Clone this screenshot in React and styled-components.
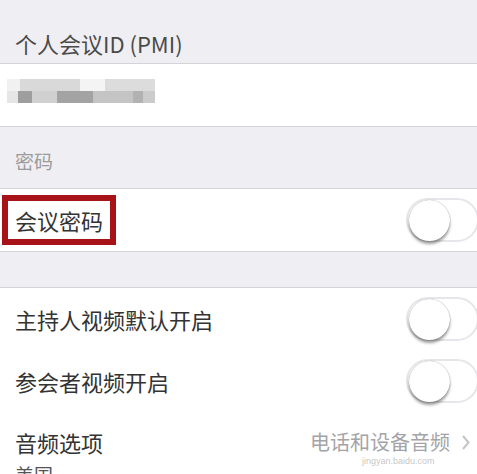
import React from "react";
import styled, { createGlobalStyle } from "styled-components";

const GlobalStyle = createGlobalStyle`
  html, body {
    margin: 0;
    padding: 0;
    background: #efeff3;
    overflow: hidden;
  }
  body {
    font-family: "Noto Sans CJK SC", "Noto Sans", sans-serif;
  }
`;

const Page = styled.div`
  width: 477px;
  height: 474px;
  overflow: hidden;
  background: #efeff3;
`;

const SectionHeader = styled.div`
  height: ${(p) => p.$height}px;
  box-sizing: border-box;
  padding: ${(p) => p.$top}px 0 0 15px;
  font-size: ${(p) => p.$size}px;
  line-height: 22px;
  color: ${(p) => p.$color};
  border-bottom: 1px solid #d4d4d8;
`;

const Group = styled.div`
  background: #fff;
  border-bottom: 1px solid #d4d4d8;
`;

const Row = styled.div`
  position: relative;
  height: ${(p) => p.$height || 61}px;
  display: flex;
  align-items: ${(p) => (p.$top ? "flex-start" : "center")};
  justify-content: space-between;
  padding-left: 15px;
  box-sizing: border-box;
  padding-top: ${(p) => p.$top || 0}px;
  & + & {
    &::before {
      content: "";
      position: absolute;
      top: 0;
      left: 15px;
      right: 0;
      border-top: 1px solid #d6d6da;
    }
  }
`;

const Label = styled.span`
  font-size: 22px;
  line-height: 22px;
  color: #333;
`;

const Highlight = styled.span`
  display: inline-flex;
  align-items: center;
  margin-left: -13px;
  padding: 8px 7px;
  border: 6px solid #a81219;
  font-size: 22px;
  line-height: 22px;
  color: #333;
`;

const Gap = styled.div`
  height: 35px;
  border-bottom: 1px solid #d4d4d8;
`;

const Track = styled.div`
  position: relative;
  width: 73px;
  height: 44px;
  box-sizing: border-box;
  border: 2px solid #e6e6ea;
  border-radius: 22px;
  background: #fff;
  margin-right: -2px;
`;

const Knob = styled.div`
  position: absolute;
  left: 1px;
  top: 0px;
  width: 41px;
  height: 41px;
  border-radius: 50%;
  background: #fff;
  box-shadow: 0 3px 3px rgba(0, 0, 0, 0.38), 0 0 1px rgba(0, 0, 0, 0.45);
`;

const Value = styled.div`
  display: flex;
  align-items: center;
  gap: 12px;
  padding-right: 7px;
  font-size: 20px;
  line-height: 22px;
  color: #a4a4a8;
`;

const SubText = styled.div`
  position: absolute;
  left: 15px;
  top: 53px;
  font-size: 19px;
  line-height: 22px;
  color: #555;
`;

const Watermark = styled.div`
  position: absolute;
  left: 362px;
  top: 45px;
  font-family: "Liberation Sans", sans-serif;
  font-size: 9px;
  line-height: 10px;
  color: rgba(170, 170, 170, 0.7);
`;

const Switch = () => (
  <Track>
    <Knob />
  </Track>
);

const Mosaic = () => (
  <svg width="160" height="28" viewBox="0 0 160 28">
    <rect x="7" y="0" width="13" height="12" fill="#f1f1f1" />
    <rect x="20" y="0" width="60" height="12" fill="#d9d9d9" />
    <rect x="80" y="0" width="25" height="12" fill="#f4f4f4" />
    <rect x="105" y="0" width="50" height="12" fill="#dcdcdc" />
    <rect x="7" y="12" width="11" height="12" fill="#e6e6e6" />
    <rect x="18" y="12" width="14" height="12" fill="#9e9e9e" />
    <rect x="32" y="12" width="25" height="12" fill="#d0d0d0" />
    <rect x="57" y="12" width="36" height="12" fill="#a3a3a3" />
    <rect x="93" y="12" width="40" height="12" fill="#c4c4c4" />
    <rect x="133" y="12" width="10" height="12" fill="#b2b2b2" />
    <rect x="143" y="12" width="12" height="12" fill="#cbcbcb" />
  </svg>
);

const Chevron = () => (
  <svg width="8" height="15" viewBox="0 0 8 15">
    <path d="M1 1 L6.5 7.5 L1 14" fill="none" stroke="#c4c4c8" strokeWidth="2" />
  </svg>
);

export default function App() {
  return (
    <Page>
      <GlobalStyle />
      <SectionHeader $height={64} $top={32} $size={22} $color="#4a4a4a">
        个人会议ID (PMI)
      </SectionHeader>
      <Group>
        <Row $height={62}>
          <span style={{ marginLeft: -15 }}>
            <Mosaic />
          </span>
        </Row>
      </Group>
      <SectionHeader $height={62} $top={23} $size={19} $color="#9b9b9b">
        密码
      </SectionHeader>
      <Group>
        <Row $height={62}>
          <Highlight>会议密码</Highlight>
          <Switch />
        </Row>
      </Group>
      <Gap />
      <Group>
        <Row $height={62}>
          <Label>主持人视频默认开启</Label>
          <Switch />
        </Row>
        <Row $height={61}>
          <Label>参会者视频开启</Label>
          <Switch />
        </Row>
        <Row $height={80} $top={20}>
          <Label>音频选项</Label>
          <Value>
            电话和设备音频
            <Chevron />
          </Value>
          <SubText>美国</SubText>
          <Watermark>jingyan.baidu.com</Watermark>
        </Row>
      </Group>
    </Page>
  );
}
